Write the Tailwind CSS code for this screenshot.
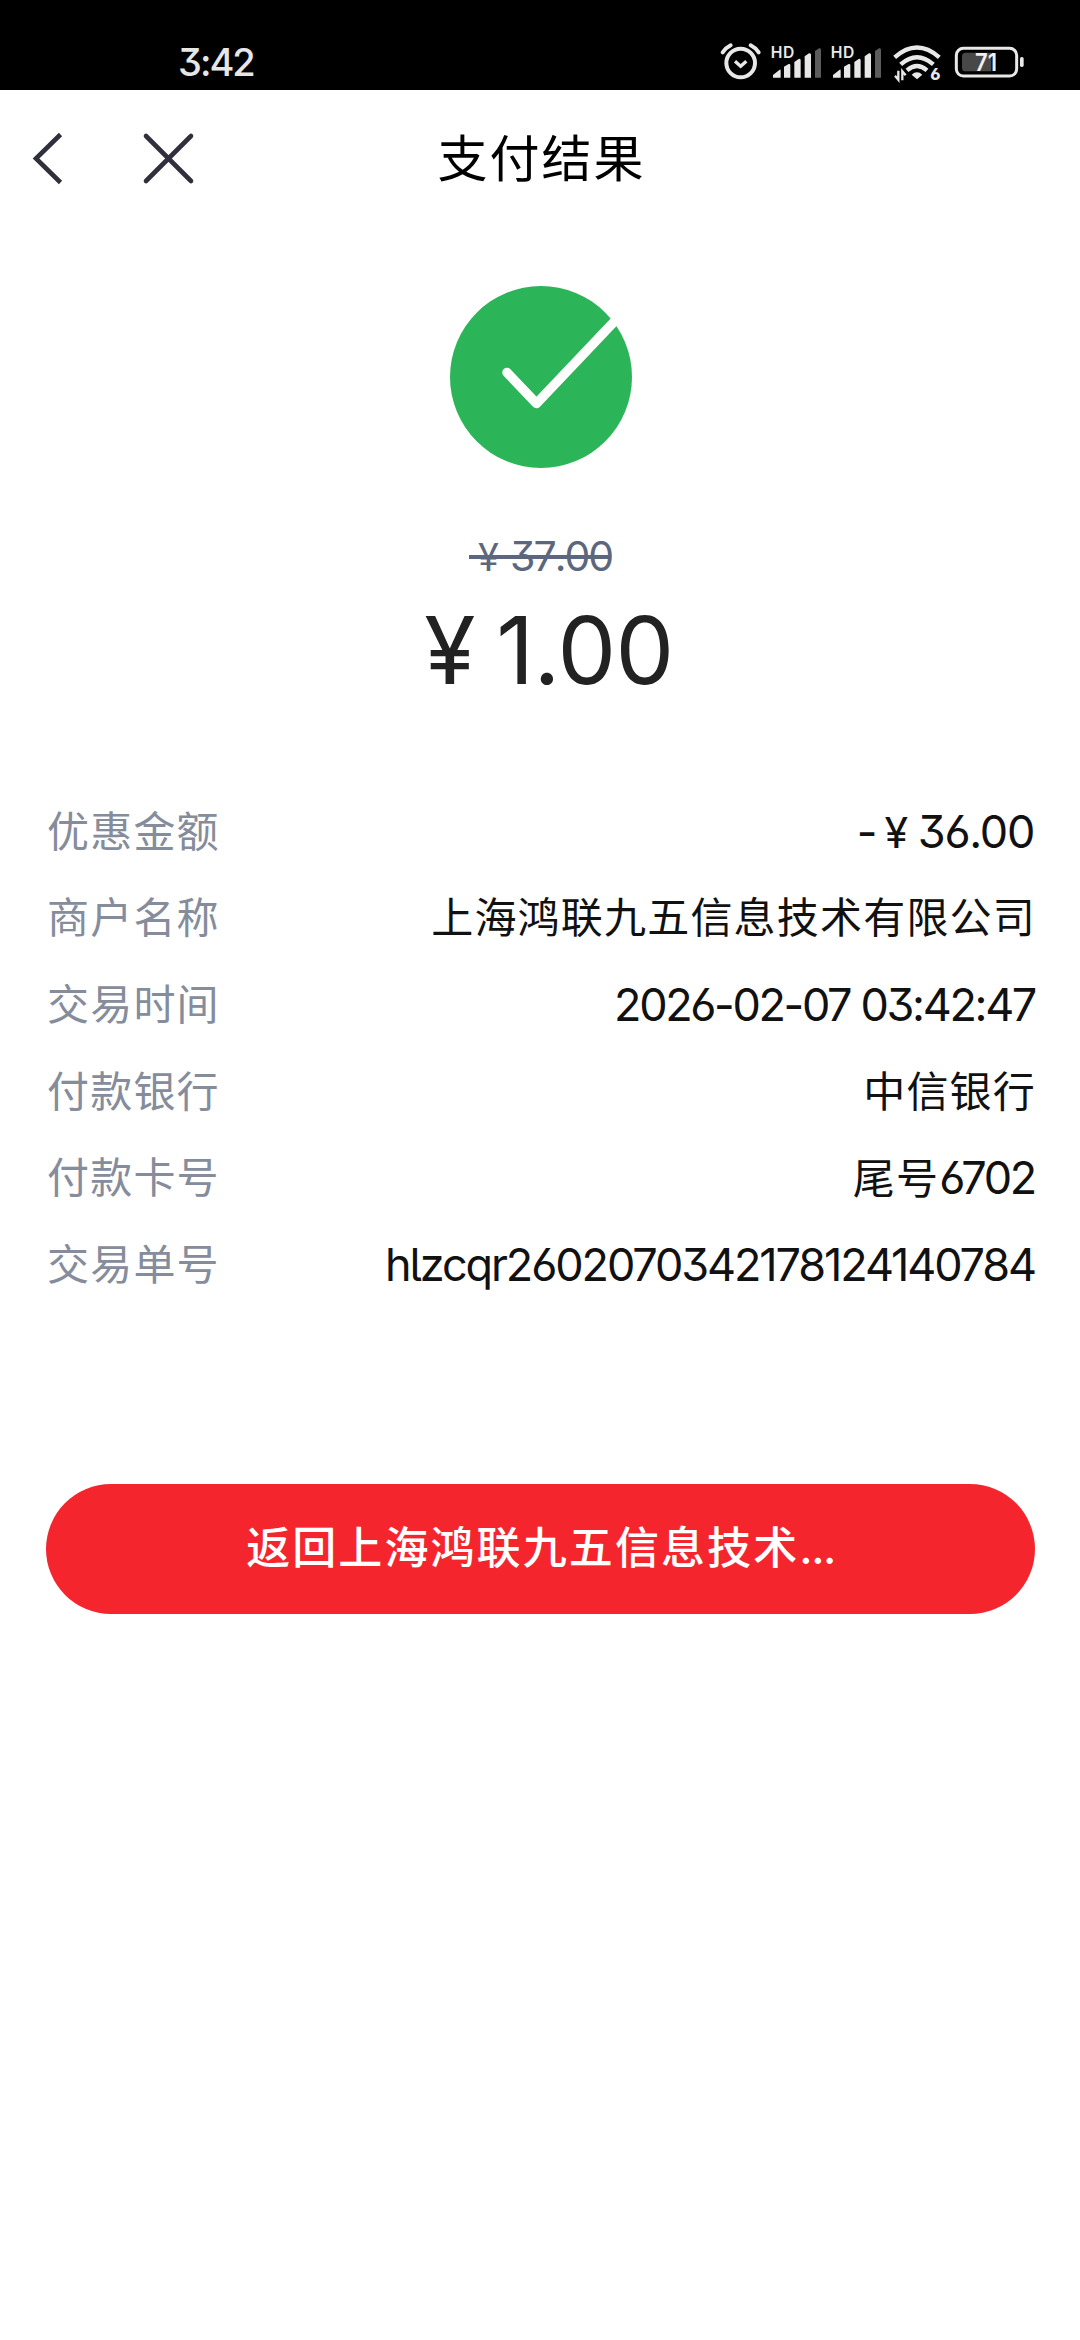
<!DOCTYPE html>
<html lang="zh-CN">
<head>
<meta charset="utf-8">
<title>支付结果</title>
<script src="https://cdn.jsdelivr.net/npm/@tailwindcss/browser@4"></script>
</head>
<body class="w-[1080px] h-[2340px] overflow-hidden bg-white text-[#111] font-[Inter,'Noto_Sans_CJK_SC',sans-serif] [font-feature-settings:'cv03','cv05','cv09']">
<div class="h-[90px] bg-black flex items-start justify-between pl-[178px] pr-[40px]">
  <span class="pt-[42px] text-[38px] leading-[40px] font-medium tracking-[-2px] text-[#e6e6e6]">3:42</span>
  <svg class="mt-[30px] w-[340px] h-[60px]" viewBox="0 0 1020 180" fill="none" stroke="#e8e8e8">
    <circle cx="122" cy="99" r="43" stroke-width="12"/>
    <path d="M105 94l17 15 17-15" stroke-width="10"/>
    <path d="M68 67q10-14 24-21M176 67q-10-14-24-21" stroke-width="12" stroke-linecap="round"/>
    <g stroke="none" fill="#e8e8e8">
      <text x="212" y="83" class="text-[47px] font-semibold" textLength="71">HD</text>
      <path d="M219 143v-8l20-16q3-1 3 3v21zM252 143v-33l14-8q5-1 5 3v38zM283 143V96l13-9q6-2 6 4v52zM314 143V79l13-9q6-2 6 4v69z"/>
      <path fill="#5c5c5c" d="M345 143V63l12-8q6-2 6 4v84z"/>
    </g>
    <g stroke="none" fill="#e8e8e8">
      <text x="392" y="83" class="text-[47px] font-semibold" textLength="71">HD</text>
      <path d="M399 143v-8l20-16q3-1 3 3v21zM432 143v-33l14-8q5-1 5 3v38zM463 143V96l13-9q6-2 6 4v52zM494 143V79l13-9q6-2 6 4v69z"/>
      <path fill="#5c5c5c" d="M525 143V63l12-8q6-2 6 4v84z"/>
    </g>
    <path d="M584 82Q651 23 718 82M602 103Q651 60 700 103M621 121Q651 95 681 121" stroke-width="13"/>
    <path d="M635 134q16-14 32 0l-16 14z" fill="#e8e8e8" stroke="none"/>
    <path d="M595 122v27l-10-12M607 151v-27l10 12" stroke-width="7"/>
    <text x="691" y="150" class="text-[49px] font-extrabold" fill="#e8e8e8" stroke="none">6</text>
    <rect x="769" y="55" width="181" height="83" rx="21" stroke-width="9"/>
    <path d="M797 68h77v56h-77q-11 0-11-11V79q0-11 11-11z" fill="#484848" stroke="none"/>
    <rect x="960" y="81" width="11" height="30" rx="5" fill="#e8e8e8" stroke="none"/>
    <text x="825" y="123" class="text-[73px] font-semibold" fill="#f0f0f0" stroke="none" textLength="66" lengthAdjust="spacingAndGlyphs">71</text>
  </svg>
</div>
<header class="h-[138px] grid grid-cols-[1fr_auto_1fr]">
  <svg class="w-[200px] h-[138px]" viewBox="0 0 200 138" fill="none" stroke="#302f3c" stroke-width="4.6">
    <path d="M60.5 44.5L36 68.5l24.500 24"/>
    <path d="M146 46l45 45M191 46l-45 45" stroke-linecap="round"/>
  </svg>
  <h1 class="text-[50px] leading-[139px] tracking-[2px] text-black pl-[3px]">支付结果</h1>
</header>
<main class="flex flex-col">
  <svg class="self-center ml-px mt-[58px] w-[182px] h-[182px]" viewBox="0 0 182 182" fill="none">
    <circle cx="91" cy="91" r="91" fill="#2cb459"/>
    <path d="M57 86.500l29.500 31L190 8.500" stroke="#fff" stroke-width="9.500" stroke-linecap="round" stroke-linejoin="round"/>
  </svg>
  <div class="self-center mt-[62px] w-[142px] h-[50px] leading-[52px] text-[41px] tracking-[-2px] [font-kerning:none] whitespace-nowrap pl-[9px] text-[#5c677e] relative"><span class="mr-[8px] inline-block w-[24px] text-[38px]">¥</span>37.00<i class="absolute left-0 right-0 top-[25px] h-[4px] bg-[#5c677e]"></i></div>
  <div class="self-center ml-[18px] mt-[16px] h-[110px] leading-[109px] text-[93px] tracking-[-0.500px] text-[#222]"><span class="inline-block w-[72px]">¥</span>1.00</div>
  <dl class="mt-[82px] pl-[47px] pr-[46px] text-[42px] [&>div]:flex [&>div]:justify-between [&>div]:h-[86.600px] [&>div]:items-center [&_dt]:text-[#858c9b] [&_dt]:tracking-[1.200px]">
    <div><dt>优惠金额</dt><dd class="text-[45px] tracking-[-1.300px]"><span class="tracking-[-3px]">-</span><span class="ml-[10px] mr-[11px] text-[43px]">¥</span>36.00</dd></div>
    <div><dt>商户名称</dt><dd class="tracking-[1.200px] mr-[-2px]">上海鸿联九五信息技术有限公司</dd></div>
    <div><dt>交易时间</dt><dd class="text-[45px] tracking-[-2.350px] mr-[-1px]">2026-02-07 03:42:47</dd></div>
    <div><dt>付款银行</dt><dd class="tracking-[1.200px] mr-[-2px]">中信银行</dd></div>
    <div><dt>付款卡号</dt><dd class="tracking-[1.200px] mr-[-1px]">尾号<span class="text-[45px] tracking-[-2.300px]">6702</span></dd></div>
    <div><dt>交易单号</dt><dd class="text-[45px] tracking-[-2.100px] mr-[-1px]">hlzcqr2602070342178124140784</dd></div>
  </dl>
  <button class="mt-[176.400px] ml-[46px] w-[989px] h-[130px] rounded-full bg-[#f5252d] text-white text-[44px] leading-[64px] pb-[2px] font-medium tracking-[2.100px]">返回上海鸿联九五信息技术<span class="tracking-[-1.500px]">...</span></button>
</main>
</body>
</html>
